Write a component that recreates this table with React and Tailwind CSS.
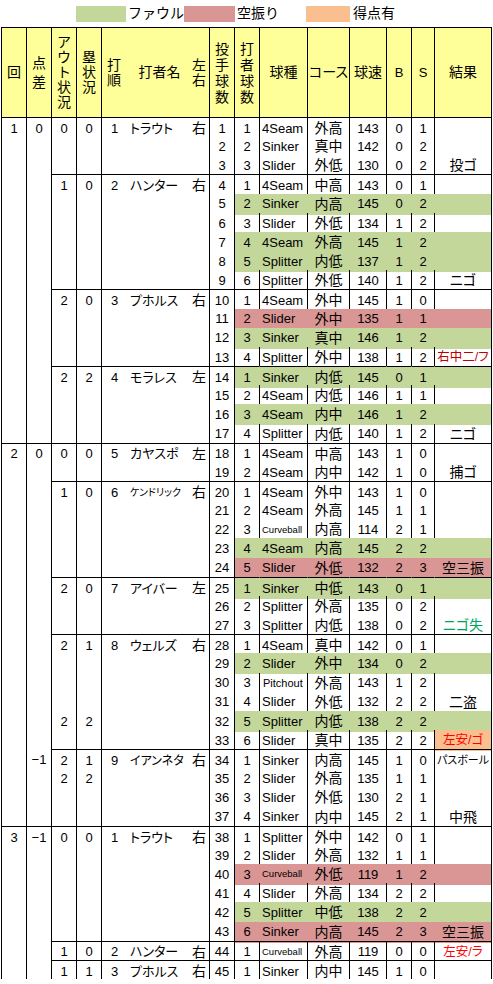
import React from "react";

const COLS =
  "grid grid-cols-[26px_25px_25px_25px_108px_25px_25px_48px_42px_37px_25px_23px_57px]";
const JP = "text-[14px] [font-feature-settings:'palt']";

const HL_BG = { g: "bg-[#C4D79B]", r: "bg-[#DA9694]", o: "bg-[#FABF8F]" };
const HL_BR = { g: "border-r-[#C4D79B]", r: "border-r-[#DA9694]" };

const P = (p, n, type, course, spd, b, s, res = "", hl = "", extra = {}) => ({
  p, n, type, course, spd, b, s, res, hl, ...extra,
});

// 回 > 打者 > 投球
const innings = [
  {
    inn: "1",
    diff: "0",
    batters: [
      {
        out: "0", base: "0", order: "1", name: "トラウト", lr: "右",
        pitches: [
          P(1, 1, "4Seam", "外高", 143, 0, 1),
          P(2, 2, "Sinker", "真中", 142, 0, 2),
          P(3, 3, "Slider", "外低", 130, 0, 2, "投ゴ"),
        ],
      },
      {
        out: "1", base: "0", order: "2", name: "ハンター", lr: "右",
        pitches: [
          P(4, 1, "4Seam", "中高", 143, 0, 1),
          P(5, 2, "Sinker", "内高", 145, 0, 2, "", "g"),
          P(6, 3, "Slider", "外低", 134, 1, 2),
          P(7, 4, "4Seam", "外高", 145, 1, 2, "", "g"),
          P(8, 5, "Splitter", "内低", 137, 1, 2, "", "g"),
          P(9, 6, "Splitter", "外低", 140, 1, 2, "ニゴ"),
        ],
      },
      {
        out: "2", base: "0", order: "3", name: "プホルス", lr: "右",
        pitches: [
          P(10, 1, "4Seam", "外中", 145, 1, 0),
          P(11, 2, "Slider", "外中", 135, 1, 1, "", "r"),
          P(12, 3, "Sinker", "真中", 146, 1, 2, "", "g"),
          P(13, 4, "Splitter", "外中", 138, 1, 2, "右中二/フ", "", { resColor: "text-[#C00000]", resSmall: true }),
        ],
      },
      {
        out: "2", base: "2", order: "4", name: "モラレス", lr: "左",
        pitches: [
          P(14, 1, "Sinker", "内低", 145, 0, 1, "", "g"),
          P(15, 2, "4Seam", "内低", 146, 1, 1),
          P(16, 3, "4Seam", "内中", 146, 1, 2, "", "g"),
          P(17, 4, "Splitter", "内低", 140, 1, 2, "ニゴ"),
        ],
      },
    ],
  },
  {
    inn: "2",
    diff: "0",
    batters: [
      {
        out: "0", base: "0", order: "5", name: "カヤスポ", lr: "左",
        pitches: [
          P(18, 1, "4Seam", "中高", 143, 1, 0),
          P(19, 2, "4Seam", "内中", 142, 1, 0, "捕ゴ"),
        ],
      },
      {
        out: "1", base: "0", order: "6", name: "ケンドリック", lr: "右", nameCls: "text-[10px]",
        pitches: [
          P(20, 1, "4Seam", "外中", 143, 1, 0),
          P(21, 2, "4Seam", "外高", 145, 1, 1),
          P(22, 3, "Curveball", "内高", 114, 2, 1),
          P(23, 4, "4Seam", "内高", 145, 2, 2, "", "g"),
          P(24, 5, "Slider", "外低", 132, 2, 3, "空三振", "r"),
        ],
      },
      {
        out: "2", base: "0", order: "7", name: "アイバー", lr: "左",
        pitches: [
          P(25, 1, "Sinker", "中低", 143, 0, 1, "", "g"),
          P(26, 2, "Splitter", "外高", 135, 0, 2),
          P(27, 3, "Splitter", "内低", 138, 0, 2, "ニゴ失", "", { resColor: "text-[#00A35C]" }),
        ],
      },
      {
        out: "2", base: "1", order: "8", name: "ウェルズ", lr: "右",
        pitches: [
          P(28, 1, "4Seam", "真中", 142, 0, 1),
          P(29, 2, "Slider", "外中", 134, 0, 2, "", "g"),
          P(30, 3, "Pitchout", "外高", 143, 1, 2),
          P(31, 4, "Slider", "外低", 132, 2, 2, "二盗"),
          P(32, 5, "Splitter", "内低", 138, 2, 2, "", "g", { out: "2", base: "2" }),
          P(33, 6, "Slider", "真中", 135, 2, 2, "左安/ゴ", "", { resColor: "text-[#FF0000]", resBg: "o", resSmall: true }),
        ],
      },
      {
        diff: "−1", out: "2", base: "1", order: "9", name: "イアンネタ", lr: "右", nameCls: "text-[12px]",
        pitches: [
          P(34, 1, "Sinker", "内高", 145, 1, 0, "パスボール", "", { resTiny: true }),
          P(35, 2, "Slider", "外高", 135, 1, 1, "", "", { out: "2", base: "2" }),
          P(36, 3, "Slider", "外低", 130, 2, 1),
          P(37, 4, "Sinker", "内中", 145, 2, 1, "中飛"),
        ],
      },
    ],
  },
  {
    inn: "3",
    diff: "−1",
    batters: [
      {
        out: "0", base: "0", order: "1", name: "トラウト", lr: "右",
        pitches: [
          P(38, 1, "Splitter", "外中", 142, 0, 1),
          P(39, 2, "Slider", "外高", 132, 1, 1),
          P(40, 3, "Curveball", "外低", 119, 1, 2, "", "r"),
          P(41, 4, "Slider", "外高", 134, 2, 2),
          P(42, 5, "Splitter", "中低", 138, 2, 2, "", "g"),
          P(43, 6, "Sinker", "内高", 145, 2, 3, "空三振", "r"),
        ],
      },
      {
        out: "1", base: "0", order: "2", name: "ハンター", lr: "右",
        pitches: [
          P(44, 1, "Curveball", "外高", 119, 0, 0, "左安/ラ", "", { resColor: "text-[#FF0000]", resSmall: true }),
        ],
      },
      {
        out: "1", base: "1", order: "3", name: "プホルス", lr: "右",
        pitches: [P(45, 1, "Sinker", "内中", 145, 1, 0)],
      },
    ],
  },
];

const rows = [];
innings.forEach((inn) =>
  inn.batters.forEach((bat, bi) =>
    bat.pitches.forEach((pt, pi) => {
      const first = pi === 0;
      rows.push({
        ...pt,
        innTop: bi === 0 && first,
        batTop: first,
        inn: bi === 0 && first ? inn.inn : "",
        diff: bi === 0 && first ? inn.diff : first ? bat.diff || "" : "",
        out: first ? bat.out : pt.out || "",
        base: first ? bat.base : pt.base || "",
        bat: first ? bat : null,
      });
    }),
  ),
);

function Stack({ chars, lh = "leading-[15px]" }) {
  return (
    <div className={`flex flex-col items-center ${lh}`}>
      {chars.split("").map((c, i) => (
        <span key={i}>{c}</span>
      ))}
    </div>
  );
}

function Legend() {
  return (
    <div className="h-[27px] flex items-center pl-[76px] text-[14px]">
      <span className="w-[50px] h-[16px] bg-[#C4D79B]" />
      <span className="w-[58px] pl-[2px]">ファウル</span>
      <span className="w-[51px] h-[16px] bg-[#DA9694]" />
      <span className="w-[71px] pl-[2px]">空振り</span>
      <span className="w-[44px] h-[16px] bg-[#FABF8F]" />
      <span className="pl-[3px]">得点有</span>
    </div>
  );
}

function Header() {
  const h = "h-[90px] border-t border-r border-black bg-[#FFFF99] flex items-center justify-center";
  return (
    <div className={`${COLS} text-[14px]`}>
      <div className={`${h} border-l`}>回</div>
      <div className={h}>
        <Stack chars="点差" lh="leading-[19px]" />
      </div>
      <div className={h}>
        <Stack chars="アウト状況" />
      </div>
      <div className={h}>
        <Stack chars="塁状況" />
      </div>
      <div className={`${h} !justify-start pl-[5px] pr-[3px]`}>
        <Stack chars="打順" />
        <span className="flex-1 text-center pl-[6px]">打者名</span>
        <Stack chars="左右" />
      </div>
      <div className={h}>
        <Stack chars="投手球数" lh="leading-[16px]" />
      </div>
      <div className={h}>
        <Stack chars="打者球数" lh="leading-[16px]" />
      </div>
      <div className={h}>球種</div>
      <div className={`${h} [font-feature-settings:'palt']`}>コース</div>
      <div className={h}>球速</div>
      <div className={`${h} text-[13px]`}>B</div>
      <div className={`${h} text-[13px]`}>S</div>
      <div className={h}>結果</div>
    </div>
  );
}

function Row({ r }) {
  const base = "h-full flex items-center border-r border-black";
  const tInn = r.innTop ? "border-t" : "";
  const tBat = r.batTop ? "border-t" : "";
  const hl = r.hl ? `${HL_BG[r.hl]} ${HL_BR[r.hl]}` : "";
  const typeSize =
    r.type === "Curveball" ? "text-[9.5px]" : r.type === "Pitchout" ? "text-[11px] pl-[3px]" : "";
  const resFont = r.resTiny
    ? "text-[11px] [font-feature-settings:'palt']"
    : r.resSmall
      ? "text-[12.5px] [font-feature-settings:'palt']"
      : JP;
  return (
    <div className={`${COLS} h-[19.17px] text-[13px]`}>
      <div className={`${base} border-l justify-center ${tInn}`}>{r.inn}</div>
      <div className={`${base} justify-center ${tInn}`}>{r.diff}</div>
      <div className={`${base} justify-center ${tBat}`}>{r.out}</div>
      <div className={`${base} justify-center ${tBat}`}>{r.base}</div>
      <div className={`${base} pl-[9px] pr-[3px] ${tBat}`}>
        {r.bat && (
          <>
            <span className="w-[19px]">{r.bat.order}</span>
            <span className={`[font-feature-settings:'palt'] ${r.bat.nameCls || "text-[13px]"}`}>
              {r.bat.name}
            </span>
            <span className="ml-auto text-[14px]">{r.bat.lr}</span>
          </>
        )}
      </div>
      <div className={`${base} justify-center ${tBat}`}>{r.p}</div>
      <div className={`${base} justify-center ${tBat} ${hl}`}>{r.n}</div>
      <div className={`${base} pl-[2px] ${tBat} ${hl} ${typeSize}`}>{r.type}</div>
      <div className={`${base} justify-center text-[14px] ${tBat} ${hl}`}>{r.course}</div>
      <div className={`${base} justify-center ${tBat} ${hl}`}>{r.spd}</div>
      <div className={`${base} justify-center ${tBat} ${hl}`}>{r.b}</div>
      <div className={`${base} justify-center ${tBat} ${hl}`}>{r.s}</div>
      <div
        className={`${base} justify-center whitespace-nowrap ${tBat} ${r.hl ? HL_BG[r.hl] : ""} ${
          r.resBg ? HL_BG[r.resBg] : ""
        } ${r.resColor || ""} ${resFont}`}
      >
        {r.res}
      </div>
    </div>
  );
}

export default function App() {
  return (
    <div className="w-[493px] bg-white text-black font-['Liberation_Sans','Noto_Sans_CJK_JP',sans-serif]">
      <Legend />
      <div className="ml-[1px]">
        <Header />
        {rows.map((r) => (
          <Row key={r.p} r={r} />
        ))}
      </div>
    </div>
  );
}
